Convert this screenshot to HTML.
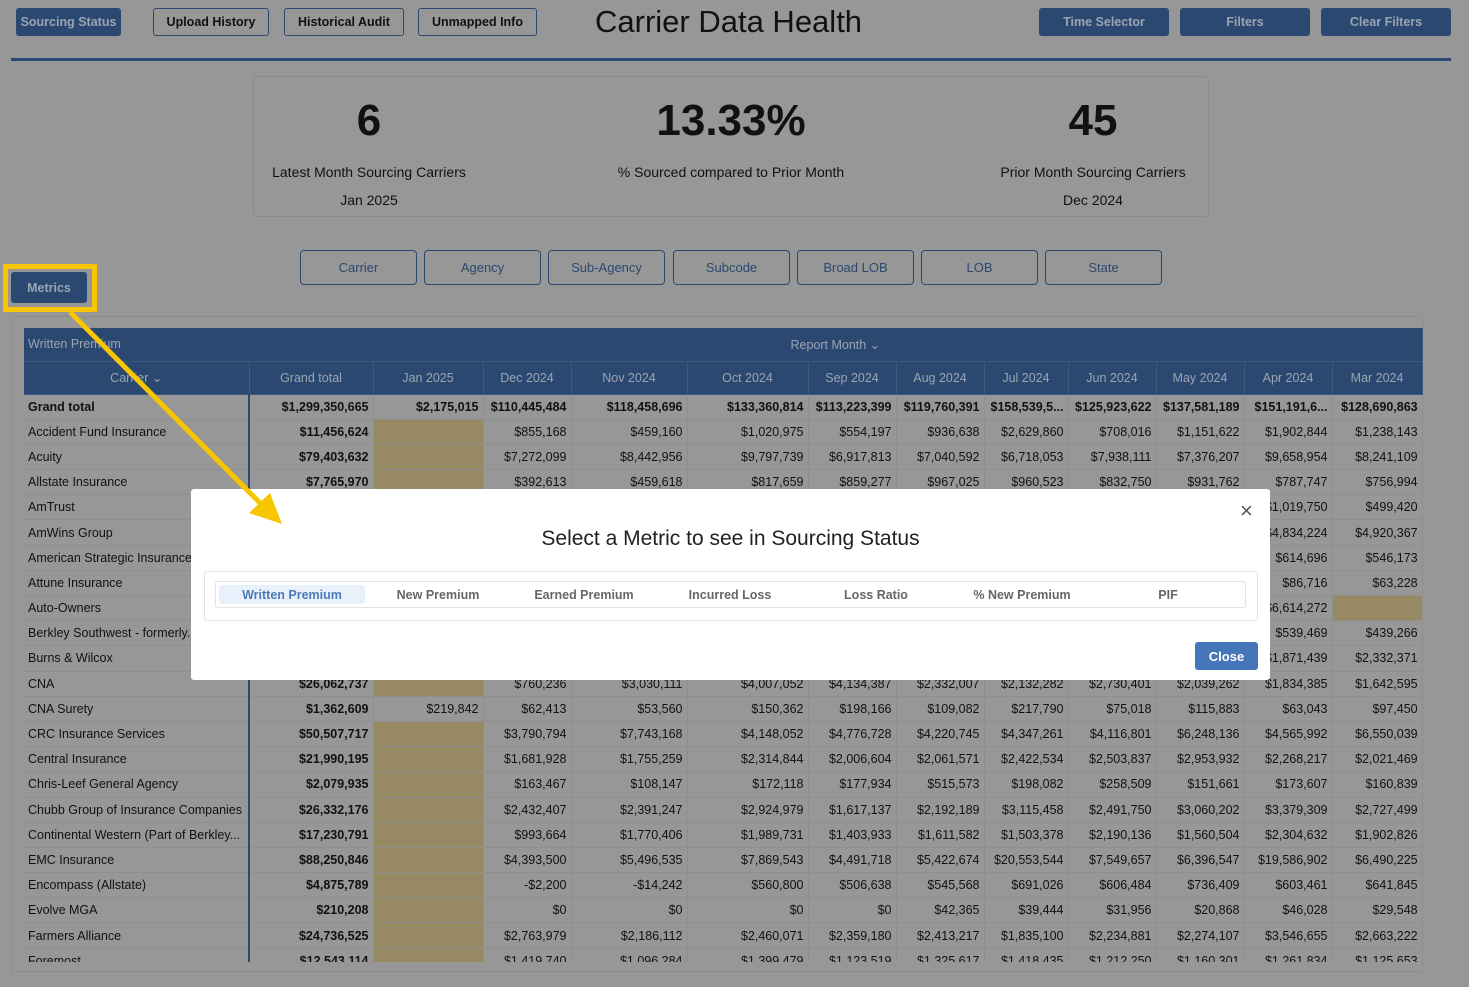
<!DOCTYPE html><html><head><style>
*{box-sizing:border-box;margin:0;padding:0}
body{width:1469px;height:987px;background:#979797;font-family:"Liberation Sans",sans-serif;position:relative;overflow:hidden;color:#111}
.a{position:absolute}
.bb{position:absolute;top:8px;height:28px;border-radius:3px;font-size:12.5px;font-weight:bold;display:flex;align-items:center;justify-content:center;white-space:nowrap}
.fill{background:#2b4970;color:#9ba4b2}
.out{border:1px solid #2b4970;color:#111}
.seg{position:absolute;top:250px;width:117px;height:35px;border:1px solid #2b4970;border-radius:4px;color:#2b4970;font-size:13px;display:flex;align-items:center;justify-content:center}
table{position:absolute;left:24px;top:328px;width:1398px;border-collapse:collapse;table-layout:fixed;font-size:12.5px}
td,th{height:25.2px;border-bottom:1px solid #8f8f8f;border-right:1px solid #8f8f8f;text-align:right;padding:0 4px;white-space:nowrap;overflow:hidden}
th{background:#2b4970;color:#9ba4b2;font-weight:normal;text-align:center;height:33px;border-color:#3d5a80}
td:first-child{text-align:left;border-right:2px solid #2b4970;text-overflow:clip}
td.y{background:#978a62}
tr.g td{font-weight:bold}
td:nth-child(2){font-weight:bold}
</style></head><body>
<div class="bb fill" style="left:16px;width:105px">Sourcing Status</div>
<div class="bb out" style="left:153px;width:116px">Upload History</div>
<div class="bb out" style="left:284px;width:120px">Historical Audit</div>
<div class="bb out" style="left:418px;width:119px">Unmapped Info</div>
<div class="a" style="left:595px;top:4px;font-size:31px;color:#111">Carrier Data Health</div>
<div class="bb fill" style="left:1039px;width:130px">Time Selector</div>
<div class="bb fill" style="left:1180px;width:130px">Filters</div>
<div class="bb fill" style="left:1321px;width:130px">Clear Filters</div>
<div class="a" style="left:11px;top:58px;width:1440px;height:3px;background:#2b4970"></div>
<div class="a" style="left:253px;top:76px;width:956px;height:141px;border:1px solid #8c8c8c;border-radius:3px"></div>
<div class="a" style="left:269px;top:96px;width:200px;text-align:center"><div style="font-size:44px;font-weight:bold;height:68px">6</div><div style="font-size:14px">Latest Month Sourcing Carriers</div><div style="font-size:14px;margin-top:12px">Jan 2025</div></div>
<div class="a" style="left:600px;top:96px;width:262px;text-align:center"><div style="font-size:44px;font-weight:bold;height:68px">13.33%</div><div style="font-size:14px">% Sourced compared to Prior Month</div></div>
<div class="a" style="left:993px;top:96px;width:200px;text-align:center"><div style="font-size:44px;font-weight:bold;height:68px">45</div><div style="font-size:14px">Prior Month Sourcing Carriers</div><div style="font-size:14px;margin-top:12px">Dec 2024</div></div>
<div class="seg" style="left:300px">Carrier</div><div class="seg" style="left:424px">Agency</div><div class="seg" style="left:548px">Sub-Agency</div><div class="seg" style="left:673px">Subcode</div><div class="seg" style="left:797px">Broad LOB</div><div class="seg" style="left:921px">LOB</div><div class="seg" style="left:1045px">State</div>
<div class="bb fill" style="left:11px;top:272px;width:76px;height:31px">Metrics</div>
<div class="a" style="left:11px;top:316px;width:1412px;height:656px;border:1px solid #8c8c8c;border-radius:3px"></div>
<table>
<colgroup><col style="width:225px"><col style="width:124px"><col style="width:110px"><col style="width:88px"><col style="width:116px"><col style="width:121px"><col style="width:88px"><col style="width:88px"><col style="width:84px"><col style="width:88px"><col style="width:88px"><col style="width:88px"><col style="width:90px"></colgroup>
<tr><th style="text-align:left;padding-left:4px;height:31px;border-right:none">Written Premium</th><th colspan="12">Report Month ⌄</th></tr>
<tr><th>Carrier ⌄</th><th>Grand total</th><th>Jan 2025</th><th>Dec 2024</th><th>Nov 2024</th><th>Oct 2024</th><th>Sep 2024</th><th>Aug 2024</th><th>Jul 2024</th><th>Jun 2024</th><th>May 2024</th><th>Apr 2024</th><th>Mar 2024</th></tr>
<tr class="g"><td>Grand total</td><td>$1,299,350,665</td><td>$2,175,015</td><td>$110,445,484</td><td>$118,458,696</td><td>$133,360,814</td><td>$113,223,399</td><td>$119,760,391</td><td>$158,539,5...</td><td>$125,923,622</td><td>$137,581,189</td><td>$151,191,6...</td><td>$128,690,863</td></tr>
<tr><td>Accident Fund Insurance</td><td>$11,456,624</td><td class="y"></td><td>$855,168</td><td>$459,160</td><td>$1,020,975</td><td>$554,197</td><td>$936,638</td><td>$2,629,860</td><td>$708,016</td><td>$1,151,622</td><td>$1,902,844</td><td>$1,238,143</td></tr>
<tr><td>Acuity</td><td>$79,403,632</td><td class="y"></td><td>$7,272,099</td><td>$8,442,956</td><td>$9,797,739</td><td>$6,917,813</td><td>$7,040,592</td><td>$6,718,053</td><td>$7,938,111</td><td>$7,376,207</td><td>$9,658,954</td><td>$8,241,109</td></tr>
<tr><td>Allstate Insurance</td><td>$7,765,970</td><td class="y"></td><td>$392,613</td><td>$459,618</td><td>$817,659</td><td>$859,277</td><td>$967,025</td><td>$960,523</td><td>$832,750</td><td>$931,762</td><td>$787,747</td><td>$756,994</td></tr>
<tr><td>AmTrust</td><td>$9,102,332</td><td class="y"></td><td>$612,400</td><td>$701,229</td><td>$820,113</td><td>$744,018</td><td>$690,402</td><td>$812,775</td><td>$730,210</td><td>$880,114</td><td>$1,019,750</td><td>$499,420</td></tr>
<tr><td>AmWins Group</td><td>$52,118,406</td><td class="y"></td><td>$4,102,331</td><td>$4,220,118</td><td>$4,550,019</td><td>$4,118,270</td><td>$4,330,662</td><td>$4,901,334</td><td>$4,201,558</td><td>$4,612,907</td><td>$4,834,224</td><td>$4,920,367</td></tr>
<tr><td>American Strategic Insurance</td><td>$6,410,228</td><td class="y"></td><td>$480,112</td><td>$502,331</td><td>$560,204</td><td>$520,883</td><td>$530,117</td><td>$590,224</td><td>$541,660</td><td>$570,903</td><td>$614,696</td><td>$546,173</td></tr>
<tr><td>Attune Insurance</td><td>$880,442</td><td class="y"></td><td>$62,118</td><td>$70,204</td><td>$80,330</td><td>$72,991</td><td>$75,406</td><td>$81,227</td><td>$70,118</td><td>$79,660</td><td>$86,716</td><td>$63,228</td></tr>
<tr><td>Auto-Owners</td><td>$70,225,901</td><td class="y"></td><td>$5,802,118</td><td>$6,020,334</td><td>$6,330,110</td><td>$5,990,442</td><td>$6,100,226</td><td>$6,420,118</td><td>$6,002,334</td><td>$6,210,778</td><td>$6,614,272</td><td class="y"></td></tr>
<tr><td>Berkley Southwest - formerly...</td><td>$5,880,117</td><td class="y"></td><td>$402,118</td><td>$450,226</td><td>$520,331</td><td>$470,118</td><td>$480,229</td><td>$510,664</td><td>$470,338</td><td>$500,227</td><td>$539,469</td><td>$439,266</td></tr>
<tr><td>Burns &amp; Wilcox</td><td>$24,110,332</td><td class="y"></td><td>$1,802,118</td><td>$1,902,443</td><td>$2,120,337</td><td>$1,930,221</td><td>$2,002,118</td><td>$2,110,406</td><td>$1,990,227</td><td>$2,040,338</td><td>$1,871,439</td><td>$2,332,371</td></tr>
<tr><td>CNA</td><td>$26,062,737</td><td class="y"></td><td>$760,236</td><td>$3,030,111</td><td>$4,007,052</td><td>$4,134,387</td><td>$2,332,007</td><td>$2,132,282</td><td>$2,730,401</td><td>$2,039,262</td><td>$1,834,385</td><td>$1,642,595</td></tr>
<tr><td>CNA Surety</td><td>$1,362,609</td><td>$219,842</td><td>$62,413</td><td>$53,560</td><td>$150,362</td><td>$198,166</td><td>$109,082</td><td>$217,790</td><td>$75,018</td><td>$115,883</td><td>$63,043</td><td>$97,450</td></tr>
<tr><td>CRC Insurance Services</td><td>$50,507,717</td><td class="y"></td><td>$3,790,794</td><td>$7,743,168</td><td>$4,148,052</td><td>$4,776,728</td><td>$4,220,745</td><td>$4,347,261</td><td>$4,116,801</td><td>$6,248,136</td><td>$4,565,992</td><td>$6,550,039</td></tr>
<tr><td>Central Insurance</td><td>$21,990,195</td><td class="y"></td><td>$1,681,928</td><td>$1,755,259</td><td>$2,314,844</td><td>$2,006,604</td><td>$2,061,571</td><td>$2,422,534</td><td>$2,503,837</td><td>$2,953,932</td><td>$2,268,217</td><td>$2,021,469</td></tr>
<tr><td>Chris-Leef General Agency</td><td>$2,079,935</td><td class="y"></td><td>$163,467</td><td>$108,147</td><td>$172,118</td><td>$177,934</td><td>$515,573</td><td>$198,082</td><td>$258,509</td><td>$151,661</td><td>$173,607</td><td>$160,839</td></tr>
<tr><td>Chubb Group of Insurance Companies</td><td>$26,332,176</td><td class="y"></td><td>$2,432,407</td><td>$2,391,247</td><td>$2,924,979</td><td>$1,617,137</td><td>$2,192,189</td><td>$3,115,458</td><td>$2,491,750</td><td>$3,060,202</td><td>$3,379,309</td><td>$2,727,499</td></tr>
<tr><td>Continental Western (Part of Berkley...</td><td>$17,230,791</td><td class="y"></td><td>$993,664</td><td>$1,770,406</td><td>$1,989,731</td><td>$1,403,933</td><td>$1,611,582</td><td>$1,503,378</td><td>$2,190,136</td><td>$1,560,504</td><td>$2,304,632</td><td>$1,902,826</td></tr>
<tr><td>EMC Insurance</td><td>$88,250,846</td><td class="y"></td><td>$4,393,500</td><td>$5,496,535</td><td>$7,869,543</td><td>$4,491,718</td><td>$5,422,674</td><td>$20,553,544</td><td>$7,549,657</td><td>$6,396,547</td><td>$19,586,902</td><td>$6,490,225</td></tr>
<tr><td>Encompass (Allstate)</td><td>$4,875,789</td><td class="y"></td><td>-$2,200</td><td>-$14,242</td><td>$560,800</td><td>$506,638</td><td>$545,568</td><td>$691,026</td><td>$606,484</td><td>$736,409</td><td>$603,461</td><td>$641,845</td></tr>
<tr><td>Evolve MGA</td><td>$210,208</td><td class="y"></td><td>$0</td><td>$0</td><td>$0</td><td>$0</td><td>$42,365</td><td>$39,444</td><td>$31,956</td><td>$20,868</td><td>$46,028</td><td>$29,548</td></tr>
<tr><td>Farmers Alliance</td><td>$24,736,525</td><td class="y"></td><td>$2,763,979</td><td>$2,186,112</td><td>$2,460,071</td><td>$2,359,180</td><td>$2,413,217</td><td>$1,835,100</td><td>$2,234,881</td><td>$2,274,107</td><td>$3,546,655</td><td>$2,663,222</td></tr>
<tr><td>Foremost</td><td>$12,543,114</td><td class="y"></td><td>$1,419,740</td><td>$1,096,284</td><td>$1,399,479</td><td>$1,123,519</td><td>$1,325,617</td><td>$1,418,435</td><td>$1,212,250</td><td>$1,160,301</td><td>$1,261,834</td><td>$1,125,653</td></tr>
</table>
<div class="a" style="left:0;top:962px;width:1469px;height:25px;background:#979797"></div>
<div class="a" style="left:11px;top:962px;width:1412px;height:10px;border:1px solid #8c8c8c;border-top:none"></div>
<div class="a" style="left:191px;top:489px;width:1079px;height:191px;background:#fff;border-radius:3px"></div>
<div class="a" style="left:1240px;top:498px;font-size:22px;color:#555">×</div>
<div class="a" style="left:191px;top:527px;width:1079px;text-align:center;font-size:21px;color:#222">Select a Metric to see in Sourcing Status</div>
<div class="a" style="left:204px;top:571px;width:1054px;height:50px;border:1px solid #e2e2e2;border-radius:3px"></div>
<div class="a" style="left:215px;top:581px;width:1031px;height:27px;border:1px solid #e2e2e2;border-radius:3px;display:flex;align-items:center;font-size:12.5px;font-weight:bold;color:#666">
<div style="width:146px;margin-left:3px;height:19px;background:#e8f0fb;color:#4a7ab8;border-radius:3px;display:flex;align-items:center;justify-content:center">Written Premium</div>
<div style="width:146px;text-align:center">New Premium</div><div style="width:146px;text-align:center">Earned Premium</div><div style="width:146px;text-align:center">Incurred Loss</div><div style="width:146px;text-align:center">Loss Ratio</div><div style="width:146px;text-align:center">% New Premium</div><div style="width:146px;text-align:center">PIF</div></div>
<div class="a" style="left:1195px;top:642px;width:63px;height:28px;background:#4576b9;border-radius:3px;color:#fff;font-weight:bold;font-size:13px;display:flex;align-items:center;justify-content:center">Close</div>
<div class="a" style="left:3px;top:264px;width:94px;height:48px;border:5px solid #f7c600"></div>
<svg class="a" style="left:0;top:0" width="1469" height="987"><line x1="70" y1="312" x2="262" y2="505" stroke="#f7c600" stroke-width="5"/><polygon points="282,524 249,513 270,493" fill="#f7c600"/></svg>
</body></html>
